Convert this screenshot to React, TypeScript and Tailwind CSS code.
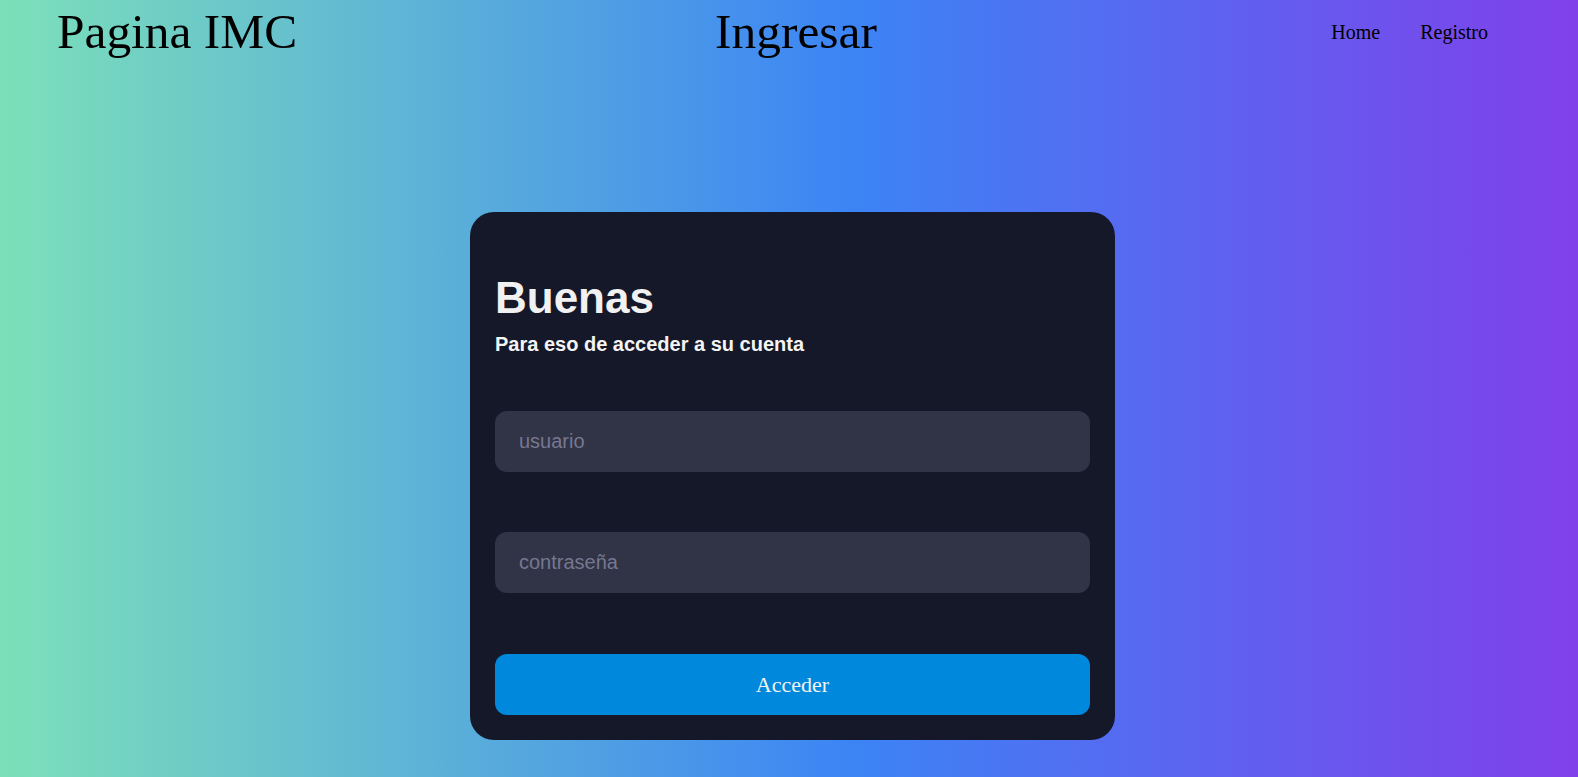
import { useState } from "react";

const serif = "font-['Liberation_Serif','Times_New_Roman',serif]";
const sans = "font-['Liberation_Sans',Arial,sans-serif]";

function Header(): JSX.Element {
  return (
    <header className={`flex items-start pt-[3px] text-black ${serif}`}>
      <h1 className="ml-[57px] text-[49.4px] leading-[57px] font-normal">Pagina IMC</h1>
      <h2 className="ml-[418px] text-[49.4px] leading-[57px] font-normal">Ingresar</h2>
      <nav className="ml-auto mr-[90px] mt-[18px] flex gap-[40px] text-[20px] leading-[23px]">
        <a href="#">Home</a>
        <a href="#">Registro</a>
      </nav>
    </header>
  );
}

function LoginCard(): JSX.Element {
  const [user, setUser] = useState("");
  const [pass, setPass] = useState("");

  const inputClass =
    "h-[61px] w-full rounded-xl bg-[#313346] px-6 text-[20px] text-[#e5e5ea] outline-none placeholder:text-[#767890] " +
    sans;

  return (
    <div className="w-[645px] rounded-[24px] bg-[#151829] px-[25px] pt-[60px] pb-[25px]">
      <h3 className={`text-[44px] leading-[51px] font-bold text-[#f1f1f1] ${sans}`}>Buenas</h3>
      <p className={`mt-[10px] text-[20px] leading-[23px] font-bold text-[#f4f4f4] ${sans}`}>
        Para eso de acceder a su cuenta
      </p>
      <form
        onSubmit={(e) => e.preventDefault()}
        className="mt-[55px] flex flex-col gap-[60px]"
      >
        <input
          type="text"
          placeholder="usuario"
          value={user}
          onChange={(e) => setUser(e.target.value)}
          className={inputClass}
        />
        <input
          type="password"
          placeholder="contraseña"
          value={pass}
          onChange={(e) => setPass(e.target.value)}
          className={`${inputClass} mt-[0px]`}
        />
        <button
          type="submit"
          className={`mt-[1px] h-[61px] w-full rounded-xl bg-[#0089dc] text-[22px] text-[#f3f3f3] ${serif}`}
        >
          Acceder
        </button>
      </form>
    </div>
  );
}

export default function App(): JSX.Element {
  return (
    <div className="min-h-screen bg-[linear-gradient(to_right,#7ce0b9_0%,#3c84f5_54%,#8040ea_100%)]">
      <Header />
      <div className="mt-[152px] flex justify-center pl-[7px] pb-[36px]">
        <LoginCard />
      </div>
    </div>
  );
}
